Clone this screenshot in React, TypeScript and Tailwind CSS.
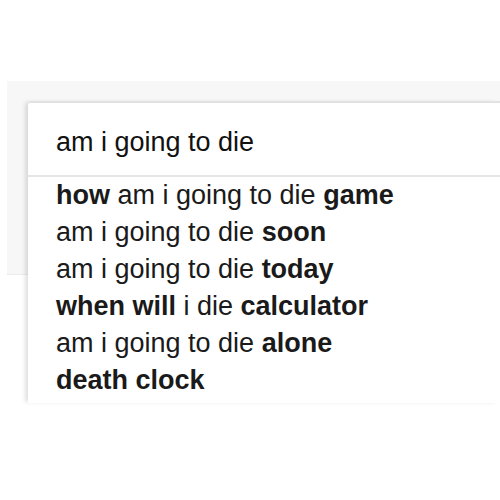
const suggestions: { text: string; bold: boolean }[][] = [
  [
    { text: "how", bold: true },
    { text: " am i going to die ", bold: false },
    { text: "game", bold: true },
  ],
  [
    { text: "am i going to die ", bold: false },
    { text: "soon", bold: true },
  ],
  [
    { text: "am i going to die ", bold: false },
    { text: "today", bold: true },
  ],
  [
    { text: "when will", bold: true },
    { text: " i die ", bold: false },
    { text: "calculator", bold: true },
  ],
  [
    { text: "am i going to die ", bold: false },
    { text: "alone", bold: true },
  ],
  [{ text: "death clock", bold: true }],
];

export default function App() {
  return (
    <main
      className="h-[500px] w-[500px] overflow-hidden bg-white text-[#1a1a1a]"
      style={{ fontFamily: '"Liberation Sans", Arial, sans-serif' }}
    >
      <div className="ml-[7px] mt-[81px] h-[194px] border-b border-[#ebebeb] bg-[#f7f7f7] pl-[21px] pt-[20px]">
        <div className="rounded-tl-[3px] border-t-2 border-[#e2e2e2] bg-white shadow-[-4px_0_4px_-1px_rgba(0,0,0,0.12)]">
          <div className="border-b-2 border-[#e6e6e6] pb-[18px] pl-[28px] pt-[24px] text-[27px] leading-[30px] text-[#111]">
            am i going to die
          </div>
          <ul className="pb-[4px] pl-[28px]">
            {suggestions.map((row, i) => (
              <li key={i} className="whitespace-pre text-[27px] leading-[37px]">
                {row.map((part, j) => (
                  <span key={j} className={part.bold ? "font-bold" : ""}>
                    {part.text}
                  </span>
                ))}
              </li>
            ))}
          </ul>
        </div>
      </div>
    </main>
  );
}
